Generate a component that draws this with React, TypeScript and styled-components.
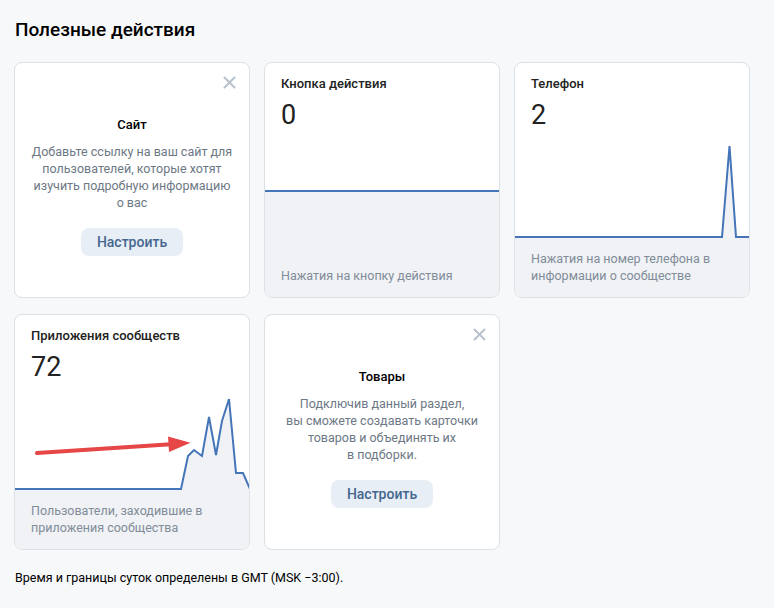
import * as React from "react";
import styled, { createGlobalStyle } from "styled-components";

const GlobalStyle = createGlobalStyle`
  body {
    margin: 0;
    background: #f7f8fa;
    font-family: Roboto, "Liberation Sans", Arial, sans-serif;
    -webkit-font-smoothing: antialiased;
  }
`;

const Page = styled.div`
  padding: 18px 14px 0;
`;

const Heading = styled.h2`
  margin: 0 0 20px 1px;
  font-size: 19px;
  line-height: 24px;
  font-weight: 500;
  color: #000;
`;

const Grid = styled.div`
  display: grid;
  grid-template-columns: repeat(3, 236px);
  grid-auto-rows: 236px;
  column-gap: 14px;
  row-gap: 16px;
`;

const Card = styled.div`
  position: relative;
  box-sizing: border-box;
  background: #fff;
  border: 1px solid #dce1e6;
  border-radius: 8px;
  overflow: hidden;
  display: flex;
  flex-direction: column;
`;

const Header = styled.div`
  padding: 12px 16px 0;
`;

const Title = styled.div`
  font-size: 13px;
  line-height: 18px;
  font-weight: 500;
  color: #222;
`;

const Count = styled.div`
  margin-top: 6px;
  font-size: 27px;
  line-height: 32px;
  color: #222;
`;

const ChartArea = styled.div`
  flex: 1;
  min-height: 0;
  svg {
    display: block;
    width: 100%;
    height: 100%;
  }
`;

const Caption = styled.div`
  background: #f0f2f5;
  padding: 12px 16px 13px;
  font-size: 12.5px;
  line-height: 17px;
  color: #818c99;
`;

const InfoCard = styled(Card)`
  align-items: center;
  justify-content: center;
  padding: 24px 10px 12px;
  text-align: center;
`;

const Close = styled.button`
  position: absolute;
  top: 13px;
  right: 13px;
  width: 13px;
  height: 13px;
  padding: 0;
  border: 0;
  background: none;
  cursor: pointer;
  svg {
    display: block;
  }
`;

const InfoTitle = styled.div`
  font-size: 13px;
  line-height: 18px;
  font-weight: 500;
  color: #000;
`;

const InfoText = styled.div`
  margin-top: 9px;
  font-size: 12.5px;
  line-height: 17px;
  color: #6d7885;
  white-space: nowrap;
`;

const SetupButton = styled.button`
  margin-top: 17px;
  height: 28px;
  padding: 0 16px;
  border: 0;
  border-radius: 8px;
  background: #e8eef5;
  color: #45678f;
  font-family: inherit;
  font-size: 14px;
  font-weight: 500;
  cursor: pointer;
`;

const Note = styled.div`
  margin: 20px 0 0 1px;
  font-size: 12.5px;
  line-height: 16px;
  color: #000;
`;

type Pt = [number, number];

const Chart = ({
  height,
  points,
  children,
}: {
  height: number;
  points: Pt[];
  children?: React.ReactNode;
}) => {
  const line = points.map((p) => p.join(",")).join(" ");
  const last = points[points.length - 1];
  const area = `${line} ${last[0]},${height} ${points[0][0]},${height}`;
  return (
    <ChartArea>
      <svg viewBox={`0 0 234 ${height}`} preserveAspectRatio="none">
        <polygon points={area} fill="#f0f2f5" />
        <polyline
          points={line}
          fill="none"
          stroke="#4475b8"
          strokeWidth={2}
          strokeLinejoin="miter"
        />
        {children}
      </svg>
    </ChartArea>
  );
};

const CloseIcon = () => (
  <Close aria-label="Закрыть">
    <svg width="13" height="13" viewBox="0 0 13 13">
      <path
        d="M1.5 1.5 L11.5 11.5 M11.5 1.5 L1.5 11.5"
        stroke="#b8c1cc"
        strokeWidth={2}
        strokeLinecap="round"
      />
    </svg>
  </Close>
);

const StatCard = ({
  title,
  count,
  caption,
  chartHeight,
  points,
  children,
}: {
  title: string;
  count: number;
  caption: React.ReactNode;
  chartHeight: number;
  points: Pt[];
  children?: React.ReactNode;
}) => (
  <Card>
    <Header>
      <Title>{title}</Title>
      <Count>{count}</Count>
    </Header>
    <Chart height={chartHeight} points={points}>
      {children}
    </Chart>
    <Caption>{caption}</Caption>
  </Card>
);

const Promo = ({ title, text }: { title: string; text: React.ReactNode }) => (
  <InfoCard>
    <CloseIcon />
    <InfoTitle>{title}</InfoTitle>
    <InfoText>{text}</InfoText>
    <SetupButton>Настроить</SetupButton>
  </InfoCard>
);

const appPoints: Pt[] = [
  [0, 106],
  [166, 106],
  [173, 73],
  [179, 67],
  [187, 73],
  [194, 34],
  [201, 72],
  [207, 38],
  [214, 16],
  [221, 90],
  [228, 90],
  [235, 106],
];

export default function App() {
  return (
    <Page>
      <GlobalStyle />
      <Heading>Полезные действия</Heading>
      <Grid>
        <Promo
          title="Сайт"
          text={
            <>
              Добавьте ссылку на ваш сайт для
              <br />
              пользователей, которые хотят
              <br />
              изучить подробную информацию
              <br />о вас
            </>
          }
        />
        <StatCard
          title="Кнопка действия"
          count={0}
          caption="Нажатия на кнопку действия"
          chartHeight={124}
          points={[
            [0, 60],
            [234, 60],
          ]}
        />
        <StatCard
          title="Телефон"
          count={2}
          caption={
            <>
              Нажатия на номер телефона в
              <br />
              информации о сообществе
            </>
          }
          chartHeight={107}
          points={[
            [0, 106],
            [207, 106],
            [214.5, 15],
            [221, 106],
            [234, 106],
          ]}
        />
        <StatCard
          title="Приложения сообществ"
          count={72}
          caption={
            <>
              Пользователи, заходившие в
              <br />
              приложения сообщества
            </>
          }
          chartHeight={107}
          points={appPoints}
        >
          <line
            x1={22}
            y1={70}
            x2={156}
            y2={61.3}
            stroke="#e64646"
            strokeWidth={4}
            strokeLinecap="round"
          />
          <polygon points="153,53.5 175.5,59.8 154,69" fill="#e64646" />
        </StatCard>
        <Promo
          title="Товары"
          text={
            <>
              Подключив данный раздел,
              <br />
              вы сможете создавать карточки
              <br />
              товаров и объединять их
              <br />в подборки.
            </>
          }
        />
      </Grid>
      <Note>Время и границы суток определены в GMT (MSK −3:00).</Note>
    </Page>
  );
}
